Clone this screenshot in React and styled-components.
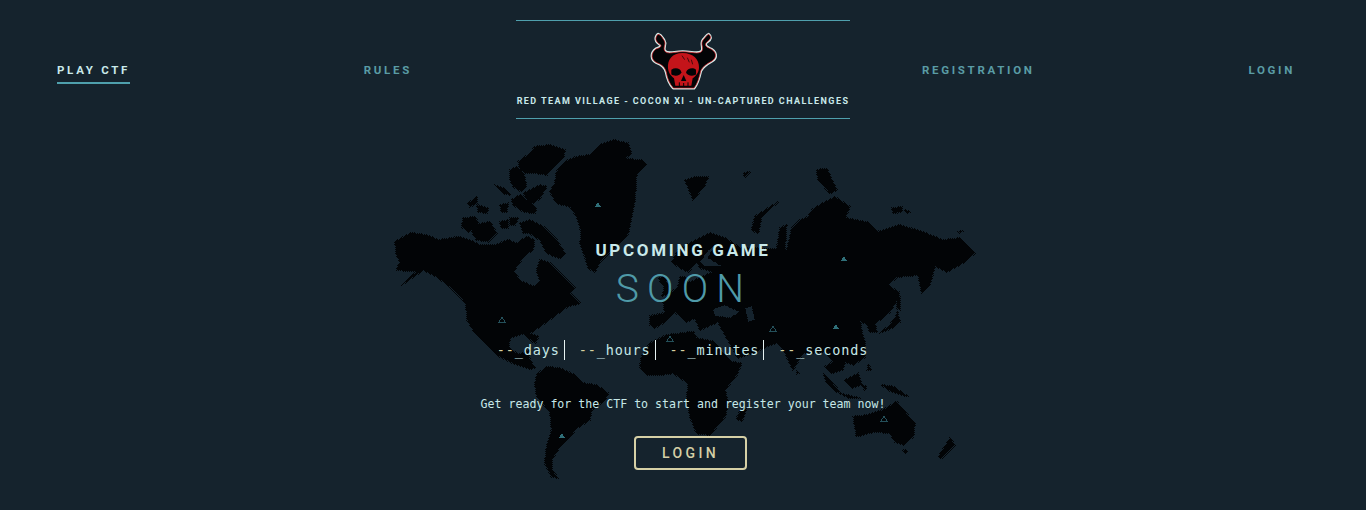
import React from 'react';
import styled, { createGlobalStyle } from 'styled-components';

const GlobalStyle = createGlobalStyle`
  html, body { margin: 0; padding: 0; background: #15232d; }
`;

const Page = styled.div`
  position: relative;
  width: 1366px;
  height: 510px;
  overflow: hidden;
  background: #15232d;
  padding-top: 20px;
  box-sizing: border-box;
`;

const MapLayer = styled.svg`
  position: absolute;
  top: 0;
  left: 0;
  width: 1366px;
  height: 510px;
`;

const Header = styled.header`
  position: relative;
  display: flex;
  align-items: center;
  padding: 0 71px 0 57px;
`;

const NavGroup = styled.nav`
  display: flex;
  justify-content: space-between;
  align-items: center;
  width: ${p => p.$width}px;
  margin-left: ${p => p.$left}px;
`;

const NavLink = styled.a`
  font-family: Roboto, sans-serif;
  font-weight: 700;
  font-size: 11.5px;
  line-height: 13px;
  letter-spacing: 2.7px;
  white-space: nowrap;
  color: ${p => (p.$active ? '#c9e9ea' : '#5a9ca5')};
  padding: 4px 0 5px;
  border-bottom: 2px solid ${p => (p.$active ? '#4fa0ad' : 'transparent')};
  margin-top: 4px;
`;

const Brand = styled.div`
  width: 334px;
  height: 99px;
  margin-left: 104px;
  box-sizing: border-box;
  border-top: 1px solid #4fa0ad;
  border-bottom: 1px solid #4fa0ad;
  display: flex;
  flex-direction: column;
  align-items: center;
  padding-top: 4px;
`;

const Logo = styled.svg`
  width: 100px;
  height: 70px;
  display: block;
  margin-left: -3px;
`;

const BrandTitle = styled.div`
  font-family: Roboto, sans-serif;
  font-weight: 700;
  font-size: 9px;
  line-height: 12px;
  letter-spacing: 1.43px;
  white-space: nowrap;
  color: #c9e9ea;
`;

const Main = styled.main`
  position: relative;
  display: flex;
  flex-direction: column;
  align-items: center;
  padding-top: 121px;
`;

const Upcoming = styled.h2`
  margin: 0;
  font-family: Roboto, sans-serif;
  font-weight: 700;
  font-size: 17px;
  line-height: 20px;
  letter-spacing: 2.7px;
  color: #c9e9ea;
`;

const Soon = styled.h1`
  margin: 6px 0 0 2px;
  font-family: Roboto, sans-serif;
  font-weight: 300;
  font-size: 39px;
  line-height: 46px;
  letter-spacing: 8.2px;
  color: #4f9aa8;
`;

const Countdown = styled.div`
  display: flex;
  margin-top: 28px;
  margin-left: -10px;
`;

const Unit = styled.div`
  font-family: 'DejaVu Sans Mono', monospace;
  font-size: 13.5px;
  line-height: 20px;
  letter-spacing: 0.85px;
  color: #c6e8e8;
  padding-right: 4px;
  margin-left: 14px;
  border-right: 1px solid ${p => (p.$last ? 'transparent' : '#e6f2f2')};
`;

const Dash = styled.span`
  color: #d7d0a0;
`;

const Lead = styled.p`
  margin: 37px 0 0;
  font-family: 'DejaVu Sans Mono', monospace;
  font-size: 11.6px;
  line-height: 14px;
  white-space: nowrap;
  color: #c6e8e8;
`;

const LoginButton = styled.button`
  margin: 25px 0 0 15px;
  width: 113px;
  height: 34px;
  box-sizing: border-box;
  background: transparent;
  border: 2px solid #d6d0a6;
  border-radius: 4px;
  font-family: Roboto, sans-serif;
  font-weight: 500;
  font-size: 14px;
  letter-spacing: 3.4px;
  color: #d6d0a6;
`;

// land outlines, each traced from a crop: [origin x, origin y, "x,y ..."], crop pixels are 1/3 page px
const LAND = [
  // greenland
  [380, 130, '630,75 660,45 700,30 745,40 755,70 735,85 790,92 798,105 770,135 765,210 755,260 745,310 720,340 690,365 660,395 645,425 625,415 615,380 600,340 605,310 590,260 570,230 530,220 510,185 525,160 530,125 555,95 590,80'],
  // arctic canada
  [380, 130, '415,95 450,70 465,50 510,45 555,60 550,85 525,105 500,135 470,130 440,130 420,120'],
  [380, 130, '390,120 410,110 430,130 440,165 425,185 400,170 390,150'],
  [380, 130, '420,195 470,235 465,250 430,245 400,225 395,210'],
  [380, 130, '430,190 480,165 500,170 480,205 450,225'],
  [380, 130, '265,220 290,200 290,220 270,230'],
  [380, 130, '290,225 325,235 320,250 295,245'],
  [380, 130, '345,165 370,175 390,195 370,190'],
  [380, 130, '360,225 385,220 380,245 365,245'],
  [380, 130, '250,265 285,260 295,280 265,305 245,290'],
  [380, 130, '280,285 330,275 350,310 325,335 290,330 275,305'],
  [380, 130, '420,280 450,270 490,290 530,330 555,370 540,385 500,370 480,330 450,310 430,310'],
  [380, 130, '360,275 385,270 385,295 365,295'],
  [380, 130, '390,265 415,265 405,285 390,285'],
  // north america
  [380, 130, '45,335 95,308 150,318 175,330 240,320 280,335 300,345 345,345 385,330 410,340 440,320 462,330 460,360 435,375 400,425 425,455 465,470 480,455 470,420 480,390 510,400 545,435 585,475 570,490 600,520 561,531 500,576 450,610 475,620 465,640 430,610 390,625 385,650 415,675 450,660 445,680 465,714 450,717 400,700 350,675 315,640 285,610 262,570 258,520 240,500 210,470 170,440 130,420 65,465 110,425 50,420 60,395 50,375'],
  // south america
  [480, 300, '170,225 200,200 240,205 285,225 310,250 350,255 385,280 375,300 335,330 330,360 290,385 270,410 240,440 215,480 215,510 235,535 215,530 195,490 200,440 215,390 210,335 170,290 165,250'],
  // africa, madagascar
  [480, 300, '480,200 485,170 510,130 560,105 640,95 650,115 700,125 735,165 755,185 785,190 770,225 735,270 745,310 735,350 690,405 650,400 630,350 620,300 625,250 580,220 540,225 500,225'],
  [480, 300, '800,325 785,365 770,355 780,335'],
  // eurasia
  [0, 0, '650,316 665,313 663,300 672,292 678,287 680,277 685,277 688,283 702,277 713,272 700,268 697,262 688,272 680,268 672,262 678,250 690,243 710,233 725,238 740,248 755,248 787,250 792,228 800,220 808,217 812,210 823,203 835,197 850,207 845,218 867,222 877,232 900,225 923,232 943,240 960,238 975,253 963,263 947,272 935,266 930,285 922,293 918,275 897,277 888,285 898,292 897,300 890,312 880,320 875,323 877,332 870,332 867,325 860,320 862,332 865,343 865,357 853,365 845,362 843,370 832,373 825,367 833,362 825,352 803,353 793,370 785,353 778,343 770,345 755,352 738,358 725,335 718,322 700,330 695,318 687,322 675,312 665,322 655,328 650,325'],
  // islands round eurasia
  [630, 220, '85,175 100,170 118,200 120,220 95,228 105,205'],
  [680, 160, '15,60 50,50 85,50 75,75 40,120 25,85'],
  [680, 160, '190,40 210,35 195,50'],
  [680, 160, '215,210 225,170 295,125 245,170 235,220'],
  [680, 160, '290,270 300,205 320,195 315,270'],
  [680, 160, '410,30 440,25 470,90 450,100 415,60'],
  [680, 160, '635,145 665,140 665,155 640,160'],
  [680, 160, '675,150 690,155 680,160'],
  [680, 160, '835,215 850,212 840,218'],
  [780, 290, '300,128 325,110 345,85 352,65 360,95 335,115'],
  [780, 290, '350,10 358,5 360,60 352,55'],
  // south east asia, oceania
  [760, 330, '110,122 118,128 110,132'],
  [760, 330, '190,130 240,185 230,185 200,160'],
  [760, 330, '240,190 300,205 270,205'],
  [760, 330, '255,150 295,130 305,165 275,175'],
  [760, 330, '305,165 320,170 315,180'],
  [760, 330, '365,165 400,170 445,200 410,190 385,180'],
  [780, 290, '265,225 275,240 262,240'],
  [760, 330, '280,260 320,255 370,240 410,215 430,240 465,280 460,320 430,345 405,335 390,310 345,305 290,320'],
  [760, 330, '570,325 585,345 545,385 535,380'],
  [760, 330, '430,360 442,362 435,370'],
];

// inland water cut back out of eurasia
const WATER = [
  [0, 0, '700,262 708,250 715,245 708,258 722,266 705,266'],
  [0, 0, '713,309 725,305 740,312 730,318 715,316'],
  [0, 0, '745,308 752,306 755,320 748,322'],
];

const MARKERS = [
  [598, 205, true], [844, 259, true], [836, 327, true], [562, 436, true],
  [773, 329, false], [502, 320, false], [670, 339, false], [884, 419, false],
];

const toPoints = ([ox, oy, pts], scale) =>
  pts.split(' ').map(p => {
    const [x, y] = p.split(',').map(Number);
    return `${ox + x * scale},${oy + y * scale}`;
  }).join(' ');

function WorldMap() {
  return (
    <MapLayer viewBox="0 0 1366 510" shapeRendering="crispEdges">
      <defs>
        <pattern id="dither" width="2" height="2" patternUnits="userSpaceOnUse">
          <rect width="1" height="1" fill="#020406" />
          <rect x="1" y="1" width="1" height="1" fill="#020406" />
        </pattern>
      </defs>
      {LAND.map((land, i) => (
        <polygon
          key={i}
          points={toPoints(land, land[0] === 0 ? 1 : 1 / 3)}
          fill="#020406"
          stroke="url(#dither)"
          strokeWidth="2"
          strokeLinejoin="round"
        />
      ))}
      {WATER.map((w, i) => (
        <polygon key={i} points={toPoints(w, 1)} fill="#15232d" stroke="url(#dither)" />
      ))}
      {MARKERS.map(([x, y, solid], i) => (
        <polygon
          key={i}
          points={`${x},${y - 3} ${x + 3},${y + 2} ${x - 3},${y + 2}`}
          fill={solid ? '#2f6f78' : 'none'}
          stroke={solid ? 'none' : '#24505a'}
          strokeWidth="1"
        />
      ))}
    </MapLayer>
  );
}

function Skull() {
  const outline = 'M78 28 C68 38 70 50 84 58 C92 64 84 68 72 72 C56 84 56 104 74 113 C90 119 99 126 103 142 C106 160 112 176 124 189 H186 C197 176 202 156 206 138 C212 124 226 116 240 108 C256 98 254 78 232 70 C220 64 216 58 226 50 C238 42 238 34 230 28 C224 30 222 36 214 44 C204 56 216 66 210 78 C200 90 180 80 152 80 C126 80 108 90 98 78 C92 66 104 58 96 46 C90 38 88 30 78 28 Z';
  return (
    <Logo viewBox="0 0 300 210">
      <path d={outline} fill="none" stroke="#d6ece8" strokeWidth="9" strokeLinejoin="round" />
      <path d={outline} fill="#020406" stroke="#d8141c" strokeWidth="2" strokeLinejoin="round" />
      <path
        d="M152 84 C120 84 106 104 108 130 C110 146 118 154 126 160 L130 182 H178 L182 160 C192 152 200 144 201 128 C202 104 184 84 152 84 Z"
        fill="#c4141a"
      />
      <path d="M118 134 C130 126 146 130 148 142 C146 152 128 156 118 148 Z" fill="#020406" />
      <path d="M192 134 C182 126 166 130 162 142 C164 152 184 156 192 148 Z" fill="#020406" />
      <path d="M155 150 L163 168 H147 Z" fill="#020406" />
      <path d="M142 172 V186 M155 174 V186 M168 172 V186" stroke="#020406" strokeWidth="3" />
      <path d="M150 92 L158 104 M166 98 L172 112 M178 104 L182 118" stroke="#020406" strokeWidth="2" />
    </Logo>
  );
}

export default function App() {
  return (
    <Page>
      <GlobalStyle />
      <WorldMap />
      <Header>
        <NavGroup $width={355}>
          <NavLink $active>PLAY CTF</NavLink>
          <NavLink>RULES</NavLink>
        </NavGroup>
        <Brand>
          <Skull />
          <BrandTitle>RED TEAM VILLAGE - COCON XI - UN-CAPTURED CHALLENGES</BrandTitle>
        </Brand>
        <NavGroup $width={373} $left={72}>
          <NavLink>REGISTRATION</NavLink>
          <NavLink>LOGIN</NavLink>
        </NavGroup>
      </Header>
      <Main>
        <Upcoming>UPCOMING GAME</Upcoming>
        <Soon>SOON</Soon>
        <Countdown>
          <Unit><Dash>--</Dash>_days</Unit>
          <Unit><Dash>--</Dash>_hours</Unit>
          <Unit><Dash>--</Dash>_minutes</Unit>
          <Unit $last><Dash>--</Dash>_seconds</Unit>
        </Countdown>
        <Lead>Get ready for the CTF to start and register your team now!</Lead>
        <LoginButton>LOGIN</LoginButton>
      </Main>
    </Page>
  );
}
